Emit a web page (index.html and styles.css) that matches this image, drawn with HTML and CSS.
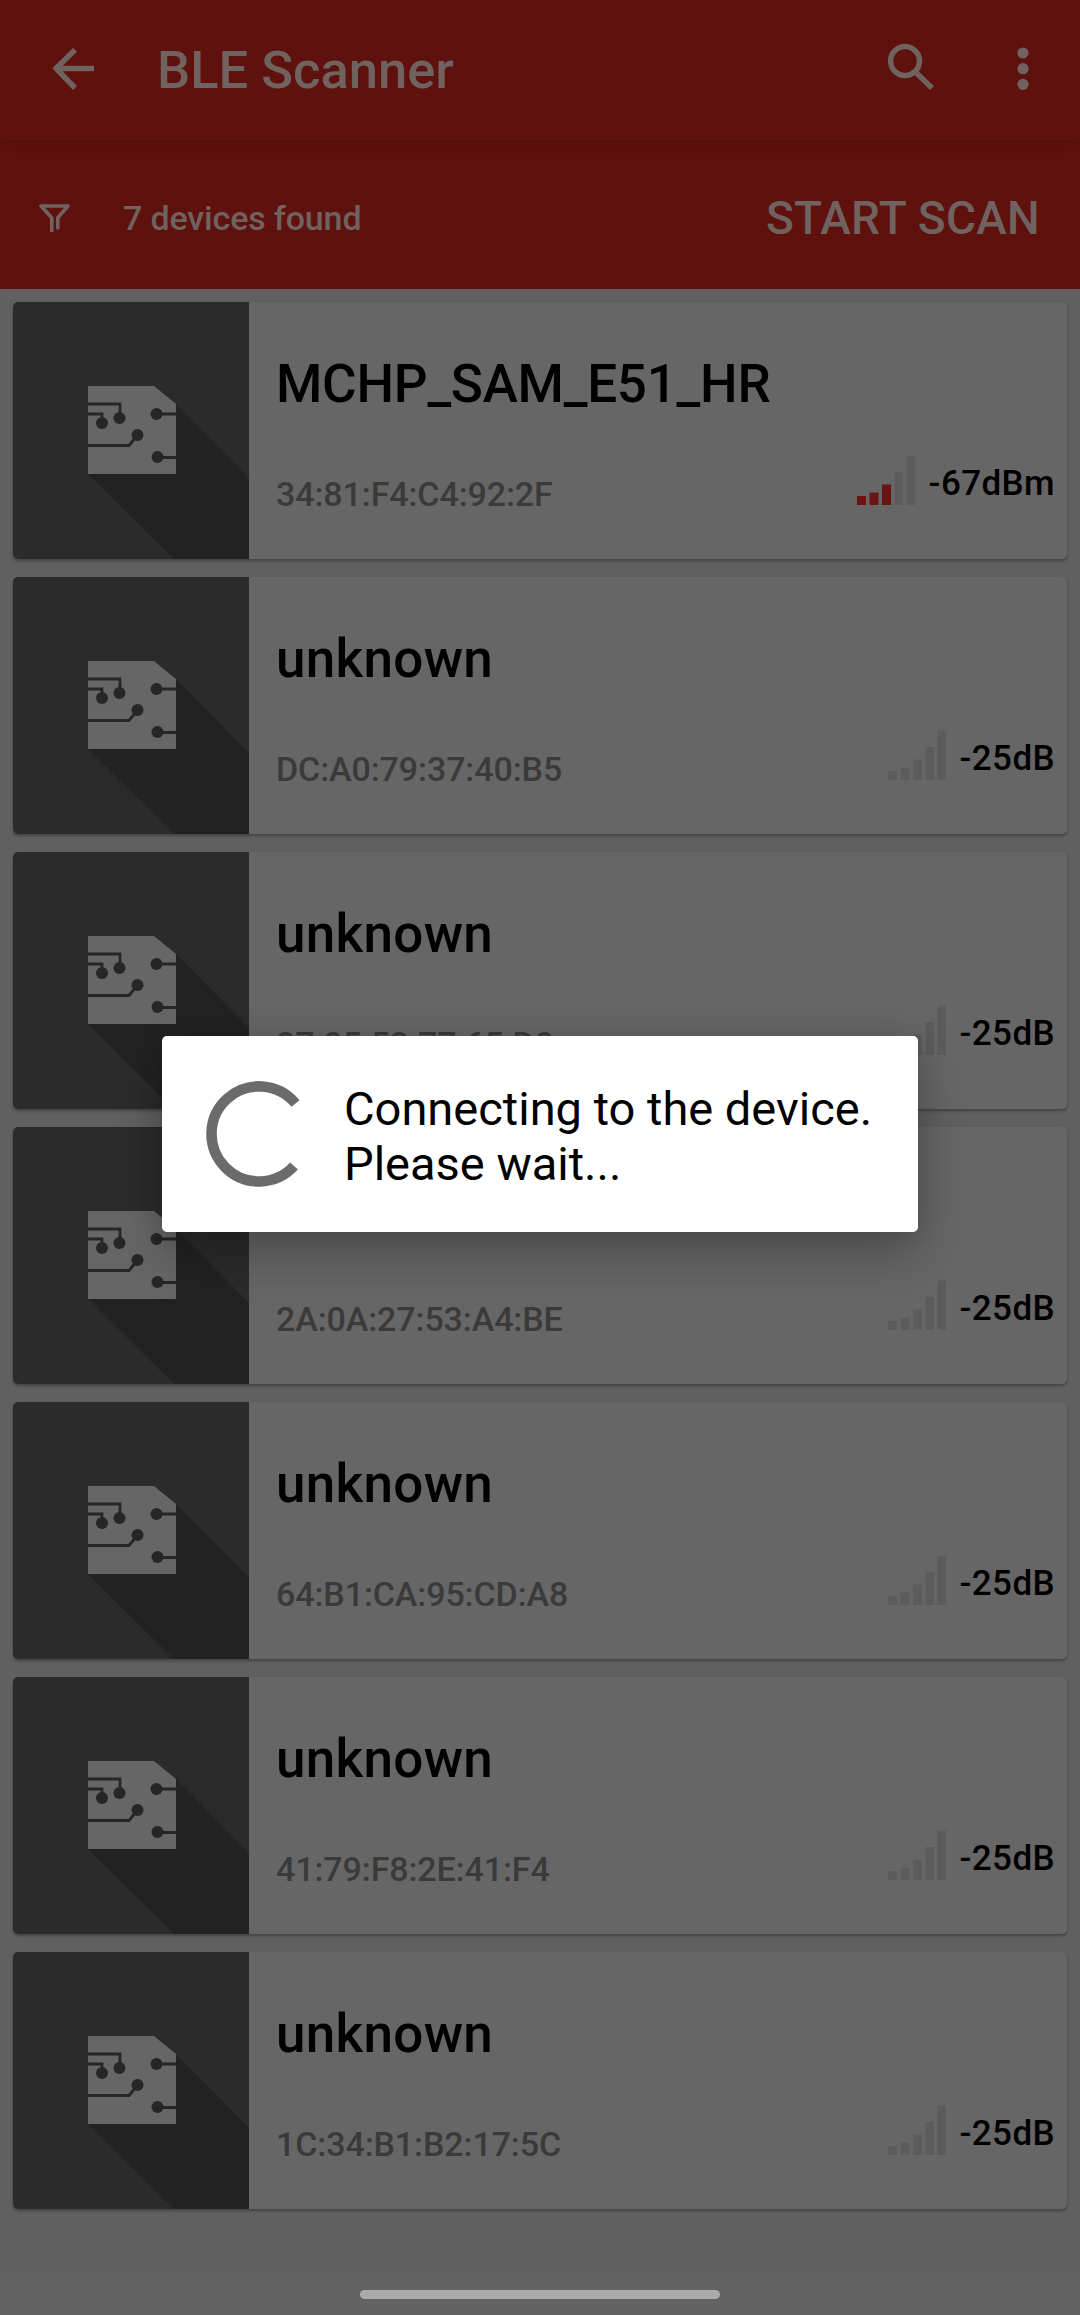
FILE: index.html
```
<!DOCTYPE html>
<html lang="en">
<head>
<meta charset="utf-8">
<title>BLE Scanner</title>
<link rel="stylesheet" href="styles.css">
</head>
<body>
<svg width="0" height="0" class="defs">
  <symbol id="board" viewBox="0 0 236 257">
    <path fill="#222" d="M75 172L163 102 236 176V257H161z"/>
    <path fill="#666" d="M75 84h66l22 18v70H75z"/>
    <g fill="none" stroke="#262626" stroke-width="2.8"><path d="M75 102h32v14M75 112h14v9M75 143.500h41l9-11M144 112h19M145 155.500h18"/></g>
    <g fill="#262626"><circle cx="106.500" cy="116" r="6"/><circle cx="89" cy="121" r="6"/><circle cx="124.500" cy="133" r="6"/><circle cx="143.500" cy="112" r="6"/><circle cx="144.500" cy="155" r="6"/></g>
  </symbol>
  <symbol id="signal" viewBox="0 0 58 50">
    <path d="M0 41h9v9H0zM12.500 37.500h9V50h-9zM25 29.500h9V50h-9z"/>
    <path fill="#5c5c5c" d="M37.500 17h8.500v33h-8.500zM49.500 0.500h8.500V50h-8.500z"/>
  </symbol>
</svg>
<div class="screen">
  <header class="appbar">
    <svg class="back" viewBox="0 0 42 42"><path d="M41 20.500H3M22 1.800L3 20.500 22 40" /></svg>
    <h1>BLE Scanner</h1>
    <svg class="search" viewBox="0 0 46 46"><circle cx="17" cy="17" r="14.500"/><path d="M28.500 29L44 44"/></svg>
    <svg class="more" viewBox="0 0 12 44"><circle cx="6" cy="6" r="5.600"/><circle cx="6" cy="21.700" r="5.600"/><circle cx="6" cy="37.300" r="5.600"/></svg>
  </header>
  <div class="toolbar">
    <svg class="filter" viewBox="0 0 32 28"><path d="M18.800 24V13.800L29 2H2L12.800 13.800V27"/></svg>
    <span class="count">7 devices found</span>
    <span class="scan">START SCAN</span>
  </div>
  <main class="list">
    <article class="card"><svg class="thumb"><use href="#board"/></svg><div class="info"><h2 class="long">MCHP_SAM_E51_HR</h2><p>34:81:F4:C4:92:2F</p></div><div class="rssi active"><svg><use href="#signal"/></svg><b>-67dBm</b></div></article>
    <article class="card"><svg class="thumb"><use href="#board"/></svg><div class="info"><h2>unknown</h2><p>DC:A0:79:37:40:B5</p></div><div class="rssi"><svg><use href="#signal"/></svg><b>-25dB</b></div></article>
    <article class="card"><svg class="thumb"><use href="#board"/></svg><div class="info"><h2>unknown</h2><p>27:05:53:77:65:D0</p></div><div class="rssi"><svg><use href="#signal"/></svg><b>-25dB</b></div></article>
    <article class="card"><svg class="thumb"><use href="#board"/></svg><div class="info"><h2>unknown</h2><p>2A:0A:27:53:A4:BE</p></div><div class="rssi"><svg><use href="#signal"/></svg><b>-25dB</b></div></article>
    <article class="card"><svg class="thumb"><use href="#board"/></svg><div class="info"><h2>unknown</h2><p>64:B1:CA:95:CD:A8</p></div><div class="rssi"><svg><use href="#signal"/></svg><b>-25dB</b></div></article>
    <article class="card"><svg class="thumb"><use href="#board"/></svg><div class="info"><h2>unknown</h2><p>41:79:F8:2E:41:F4</p></div><div class="rssi"><svg><use href="#signal"/></svg><b>-25dB</b></div></article>
    <article class="card"><svg class="thumb"><use href="#board"/></svg><div class="info"><h2>unknown</h2><p>1C:34:B1:B2:17:5C</p></div><div class="rssi"><svg><use href="#signal"/></svg><b>-25dB</b></div></article>
  </main>
  <footer class="nav"><span class="pill"></span></footer>
  <div class="dialog" role="dialog">
    <svg class="spinner" viewBox="0 0 106 106"><path d="M89.500 22.500A47.500 47.500 0 1 0 88 85"/></svg>
    <p>Connecting to the device.<br>Please wait...</p>
  </div>
</div>
</body>
</html>
```
FILE: styles.css
```
* { box-sizing: border-box; margin: 0; }
body { font-family: Roboto, "Liberation Sans", sans-serif; background: #606060; }
.defs { position: absolute; }
.screen { position: relative; width: 1080px; height: 2315px; display: flex; flex-direction: column; overflow: hidden; }

.appbar { height: 140px; flex: none; display: flex; align-items: center; padding: 0 51px 2px 53px; background: #5e110d; box-shadow: 0 2px 12px rgba(0, 0, 0, .14); z-index: 1; }
.appbar svg { flex: none; fill: none; stroke: #70625f; }
.back { width: 42px; height: 42px; stroke-width: 5.500; }
.appbar h1 { margin: 2px 0 0 62px; flex: 1; font-size: 52.500px; font-weight: 500; line-height: 62px; color: #70625f; }
.search { width: 46px; height: 46px; stroke-width: 5.500; margin-right: 83px; margin-top: -4px; }
.appbar .more { width: 12px; height: 44px; fill: #70625f; stroke: none; }

.toolbar { height: 149px; flex: none; display: flex; align-items: center; padding: 6px 40px 0 39px; background: #5e110d; color: #70625f; font-weight: 500; }
.filter { width: 32px; height: 28px; fill: none; stroke: #70625f; stroke-width: 3.600; stroke-linejoin: round; stroke-linecap: round; }
.count { margin-left: 52px; flex: 1; font-size: 34px; letter-spacing: -.15px; }
.scan { font-size: 46px; letter-spacing: .3px; }

.list { flex: 1; display: flex; flex-direction: column; gap: 18.200px; padding: 13px 13px 0; }
.card { height: 256.800px; flex: none; display: flex; border-radius: 5px; background: #666; box-shadow: 0 2px 3px rgba(0, 0, 0, .3); }
.thumb { width: 236px; height: 257px; flex: none; background: #2b2b2b; border-radius: 5px 0 0 5px; }
.info { flex: 1; padding: 51px 0 0 27px; }
.info h2 { font-size: 53px; line-height: 62px; font-weight: 500; letter-spacing: .3px; color: #000; white-space: nowrap; }
.info .long { letter-spacing: -.25px; }
.info p { margin-top: 59px; font-size: 34px; line-height: 40px; font-weight: 500; letter-spacing: -.1px; color: #3a3a3a; white-space: nowrap; }
.rssi { display: flex; align-items: flex-start; padding: 153px 12px 0 0; fill: #5c5c5c; }
.rssi.active { fill: #6b1512; }
.rssi svg { width: 58px; height: 50px; margin-right: 14px; }
.rssi b { margin-top: 8px; font-size: 35px; line-height: 41px; font-weight: 500; letter-spacing: .4px; }

.nav { height: 43px; flex: none; display: flex; justify-content: center; padding-top: 18px; background: #636363; }
.pill { width: 360px; height: 9px; border-radius: 5px; background: #aaa; }

.dialog { position: absolute; left: 162px; top: 1036px; width: 756px; height: 196px; display: flex; align-items: center; padding-left: 44px; border-radius: 5px; background: #fff; box-shadow: 0 22px 50px rgba(0, 0, 0, .25), 0 0 24px rgba(0, 0, 0, .1); z-index: 2; }
.spinner { width: 106px; height: 106px; flex: none; fill: none; stroke: #6b6b6b; stroke-width: 10.500; }
.dialog p { margin: 3px 0 0 32px; font-size: 47px; line-height: 55px; color: #000; white-space: nowrap; }
```
